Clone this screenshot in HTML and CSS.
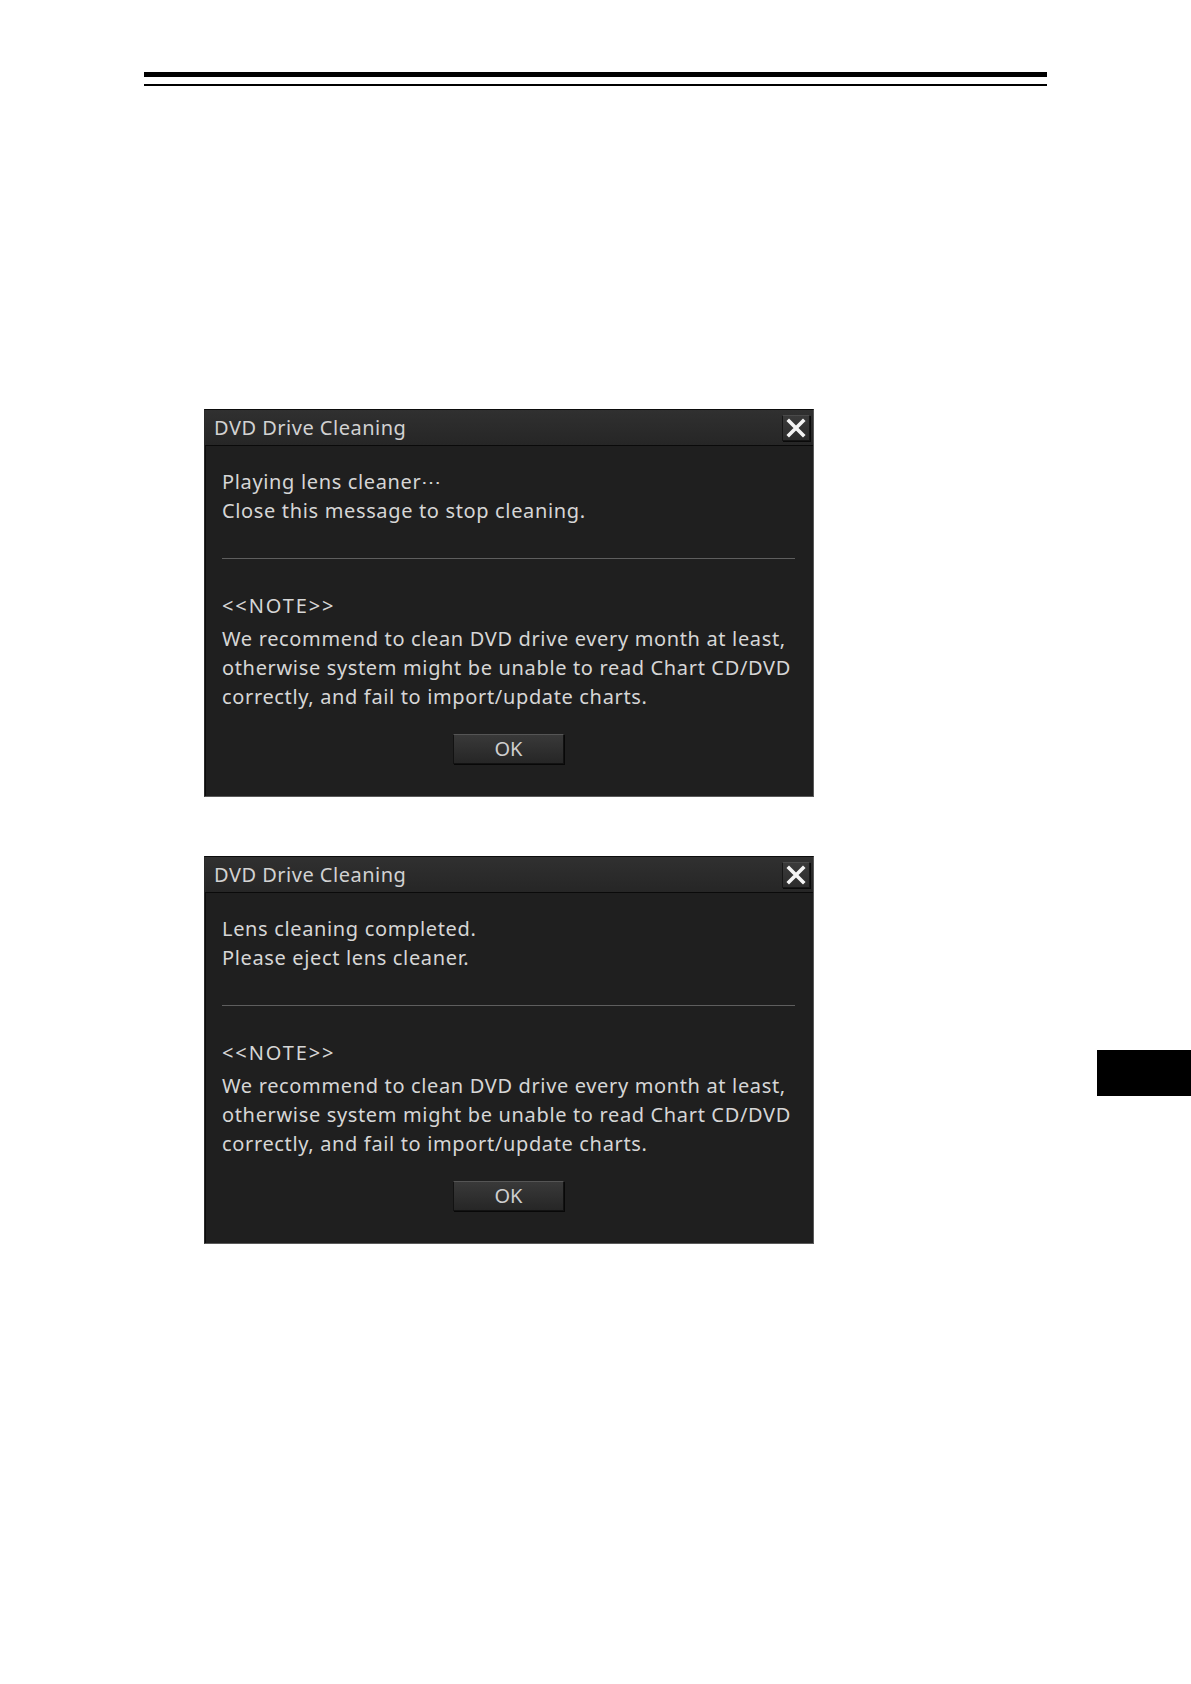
FILE: index.html
```html
<!DOCTYPE html>
<html lang="en">
<head>
    <meta charset="UTF-8">
    <meta name="viewport" content="width=device-width, initial-scale=1.0">
    <title>DVD Drive Cleaning</title>
    <link rel="stylesheet" href="styles.css">
</head>
<body>
    <div class="page">
        <div class="header-rules">
            <div class="rule-thick"></div>
            <div class="rule-thin"></div>
        </div>

        <div class="figures">
            <div class="dialog">
                <div class="dialog-title">
                    <span>DVD Drive Cleaning</span>
                    <button class="close-btn" type="button" aria-label="Close">
                        <svg width="20" height="20" viewBox="0 0 20 20">
                            <path d="M3 3 L17 17 M17 3 L3 17" stroke="#f4f4f4" stroke-width="3.6" stroke-linecap="square" fill="none"/>
                        </svg>
                    </button>
                </div>
                <div class="dialog-body">
                    <p class="message">Playing lens cleaner&#x22EF;<br>Close this message to stop cleaning.</p>
                    <hr class="separator">
                    <p class="note-head">&lt;&lt;NOTE&gt;&gt;</p>
                    <p class="note">We recommend to clean DVD drive every month at least,<br>otherwise system might be unable to read Chart CD/DVD<br>correctly, and fail to import/update charts.</p>
                    <div class="actions">
                        <button class="ok-btn" type="button">OK</button>
                    </div>
                </div>
            </div>

            <div class="dialog">
                <div class="dialog-title">
                    <span>DVD Drive Cleaning</span>
                    <button class="close-btn" type="button" aria-label="Close">
                        <svg width="20" height="20" viewBox="0 0 20 20">
                            <path d="M3 3 L17 17 M17 3 L3 17" stroke="#f4f4f4" stroke-width="3.6" stroke-linecap="square" fill="none"/>
                        </svg>
                    </button>
                </div>
                <div class="dialog-body">
                    <p class="message">Lens cleaning completed.<br>Please eject lens cleaner.</p>
                    <hr class="separator">
                    <p class="note-head">&lt;&lt;NOTE&gt;&gt;</p>
                    <p class="note">We recommend to clean DVD drive every month at least,<br>otherwise system might be unable to read Chart CD/DVD<br>correctly, and fail to import/update charts.</p>
                    <div class="actions">
                        <button class="ok-btn" type="button">OK</button>
                    </div>
                </div>
            </div>
        </div>

        <div class="side-tab"></div>
    </div>
</body>
</html>
```

FILE: styles.css
```css
body {
    margin: 0;
    background-color: white;
    font-family: "Noto Sans", "Open Sans", sans-serif;
}
.page {
    position: relative;
    width: 1191px;
    min-height: 1684px;
}
.header-rules {
    padding: 72px 144px 0;
}
.rule-thick {
    height: 5px;
    background-color: black;
}
.rule-thin {
    height: 2px;
    margin-top: 7px;
    background-color: black;
}
.figures {
    display: flex;
    flex-direction: column;
    gap: 59px;
    padding: 323px 0 0 204px;
}
.dialog {
    width: 608px;
    height: 386px;
    display: flex;
    flex-direction: column;
    background-color: #1f1f1f;
    border: 1px solid #5a5a5a;
    border-top-color: #0c0c0c;
    border-left-color: #2a2a2a;
    box-shadow: inset 1px 0 0 #0c0c0c;
    color: #d6d6d6;
}
.dialog-title {
    height: 35px;
    display: flex;
    align-items: center;
    justify-content: space-between;
    padding: 0 3px 0 9px;
    background: linear-gradient(#303030, #262626);
    border-bottom: 1px solid #0a0a0a;
    font-size: 20px;
    letter-spacing: 0.5px;
    color: #d2d2d2;
}
.close-btn {
    width: 28px;
    height: 26px;
    padding: 0;
    display: flex;
    align-items: center;
    justify-content: center;
    background: linear-gradient(#3a3a3a, #2c2c2c);
    border: 1px solid #151515;
    border-top-color: #4a4a4a;
    box-shadow: 1px 1px 0 #0a0a0a;
}
.dialog-body {
    padding: 21px 18px 0 17px;
    font-size: 20px;
    letter-spacing: 0.65px;
}
.message {
    margin: 0;
    line-height: 29px;
}
.separator {
    margin: 33px 0 0;
    border: none;
    height: 1px;
    background-color: #5e5e5e;
}
.note-head {
    margin: 32px 0 4px;
    line-height: 29px;
    letter-spacing: 1.9px;
}
.note {
    margin: 0;
    line-height: 29px;
}
.actions {
    display: flex;
    justify-content: center;
    margin-top: 23px;
}
.ok-btn {
    width: 111px;
    height: 30px;
    padding: 0;
    font-family: "Noto Sans", sans-serif;
    font-size: 20px;
    line-height: 26px;
    color: #cfcfcf;
    background: linear-gradient(#393939, #262626);
    border: 1px solid #121212;
    border-top-color: #555555;
    box-shadow: 1px 1px 0 #080808;
}
.side-tab {
    position: absolute;
    top: 1050px;
    right: 0;
    width: 94px;
    height: 46px;
    background-color: black;
}
```
